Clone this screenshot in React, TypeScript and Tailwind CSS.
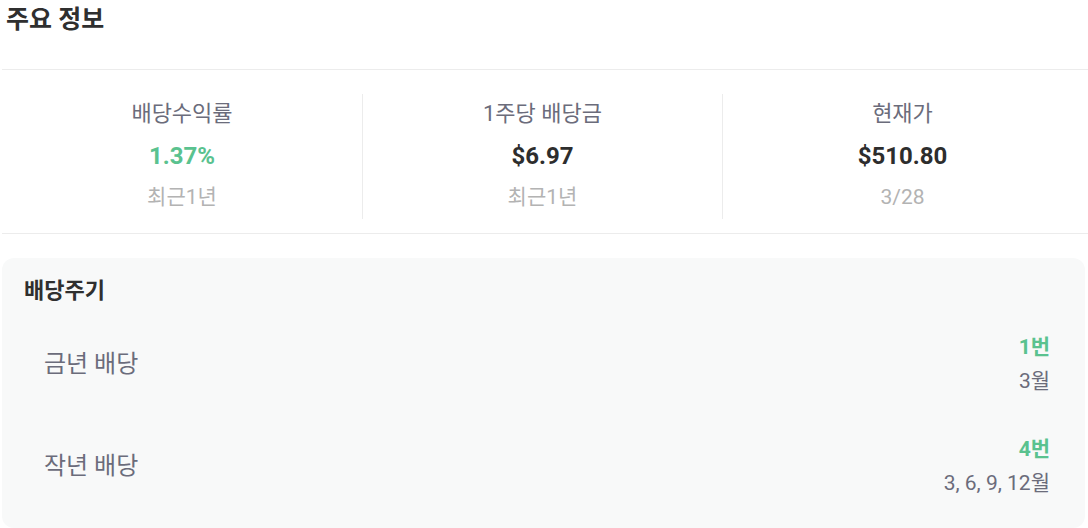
const stats = [
  { label: '배당수익률', value: '1.37%', sub: '최근1년', green: true },
  { label: '1주당 배당금', value: '$6.97', sub: '최근1년', green: false },
  { label: '현재가', value: '$510.80', sub: '3/28', green: false },
]

const cycles = [
  { label: '금년 배당', count: '1번', months: '3월' },
  { label: '작년 배당', count: '4번', months: '3, 6, 9, 12월' },
]

export default function App() {
  return (
    <div
      className="w-[1088px] h-[528px] bg-white overflow-hidden"
      style={{ fontFamily: 'Roboto, "Noto Sans CJK KR", sans-serif' }}
    >
      <div className="h-[69px] pl-[6px] pt-[4px]">
        <h2 className="text-[25px] leading-[32px] font-bold text-[#2f2f2f]">주요 정보</h2>
      </div>

      <div className="ml-[2px] border-t border-b border-[#ececec] pt-[24px] pb-[14px] flex">
        {stats.map((s, i) => (
          <div
            key={s.label}
            className={`w-[360px] flex flex-col items-center pt-[5px] pb-[8px] ${i > 0 ? 'border-l border-[#ececec]' : ''}`}
          >
            <div className="text-[22px] leading-[30px] text-[#6b6c7b]">{s.label}</div>
            <div
              className={`mt-[11px] text-[24px] leading-[32px] font-bold ${s.green ? 'text-[#5ac28f]' : 'text-[#2d2d2d]'}`}
            >
              {s.value}
            </div>
            <div className="mt-[11px] text-[21px] leading-[28px] text-[#b3b3b3]">{s.sub}</div>
          </div>
        ))}
      </div>

      <div className="mt-[24px] ml-[2px] mr-[3px] h-[270px] rounded-[12px] bg-[#f8f9f9] pt-[18px] pl-[22px] pr-[35px]">
        <h3 className="text-[22px] leading-[30px] font-bold text-[#2f2f2f]">배당주기</h3>
        <div className="mt-[27px] flex flex-col gap-[40px]">
          {cycles.map(c => (
            <div key={c.label} className="flex items-center justify-between">
              <div className="pl-[20px] text-[24px] leading-[32px] text-[#6b6c7b]">{c.label}</div>
              <div className="flex flex-col items-end">
                <div className="text-[21px] leading-[28px] font-bold text-[#5ac28f]">{c.count}</div>
                <div className="mt-[6px] text-[21px] leading-[28px] text-[#6b6c7b]">{c.months}</div>
              </div>
            </div>
          ))}
        </div>
      </div>
    </div>
  )
}
